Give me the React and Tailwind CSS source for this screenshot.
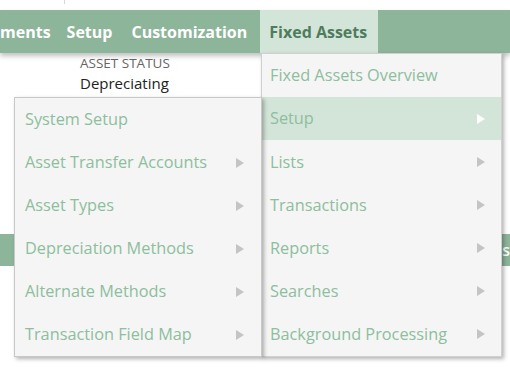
import React from "react";

const Arrow = ({ white }) => (
  <svg width="8" height="10" viewBox="0 0 8 10" className="shrink-0">
    <polygon points="0,0 8,5 0,10" fill={white ? "#ffffff" : "#c4c4c4"} />
  </svg>
);

const leftItems = [
  ["System Setup", false],
  ["Asset Transfer Accounts", true],
  ["Asset Types", true],
  ["Depreciation Methods", true],
  ["Alternate Methods", true],
  ["Transaction Field Map", true],
];

const rightItems = [
  ["Fixed Assets Overview", false, false],
  ["Setup", true, true],
  ["Lists", true, false],
  ["Transactions", true, false],
  ["Reports", true, false],
  ["Searches", true, false],
  ["Background Processing", true, false],
];

export default function App() {
  return (
    <div
      className="relative w-[510px] h-[382px] overflow-hidden bg-white"
      style={{ fontFamily: '"Open Sans", "Noto Sans", sans-serif' }}
    >
      <div className="h-[10px] bg-white pl-[64px]">
        <div className="w-px h-[4px] bg-[#d8d8d8]" />
      </div>
      <nav className="h-[43px] bg-[#8db59a] flex items-stretch text-[16px] font-bold text-white shadow-[0_3px_5px_rgba(0,0,0,0.25)] relative z-0">
        <div className="flex items-center pr-[16px]">ments</div>
        <div className="flex items-center pr-[19px]">Setup</div>
        <div className="flex items-center pr-[13px]">Customization</div>
        <div className="flex items-center bg-[#d3e5d9] text-[#4e7c5d] px-[9px] w-[118px]">Fixed Assets</div>
      </nav>
      <div className="pl-[80px] pt-[1px] h-[181px]">
        <div className="text-[13.5px] leading-[19px] text-[#666666] uppercase">Asset Status</div>
        <div className="text-[15px] leading-[21px] text-[#222222]">Depreciating</div>
      </div>
      <div className="h-[32px] bg-[#8db59a] flex items-center justify-end text-[16px] font-semibold text-white">
        <span className="leading-none">ss</span>
      </div>

      <div className="absolute left-[261px] top-[53px] w-[241px] h-[304px] bg-[#f5f5f5] border border-[#d0d0d0] shadow-[2px_2px_4px_rgba(0,0,0,0.3)] flex flex-col z-10">
        {rightItems.map(([label, arrow, active]) => (
          <div
            key={label}
            className={`h-[43.3px] flex items-center justify-between pl-[8px] pr-[16px] text-[16.3px] text-[#8dbe9d] ${active ? "bg-[#d3e5d9]" : ""}`}
          >
            <span>{label}</span>
            {arrow && <Arrow white={active} />}
          </div>
        ))}
      </div>

      <div className="absolute left-[14px] top-[97px] w-[248px] h-[260px] bg-[#f5f5f5] border border-[#c8c8c8] shadow-[2px_2px_4px_rgba(0,0,0,0.3)] flex flex-col z-20">
        {leftItems.map(([label, arrow]) => (
          <div
            key={label}
            className="h-[43.3px] flex items-center justify-between pl-[10px] pr-[17px] text-[16.3px] text-[#8dbe9d]"
          >
            <span>{label}</span>
            {arrow && <Arrow />}
          </div>
        ))}
      </div>
    </div>
  );
}
